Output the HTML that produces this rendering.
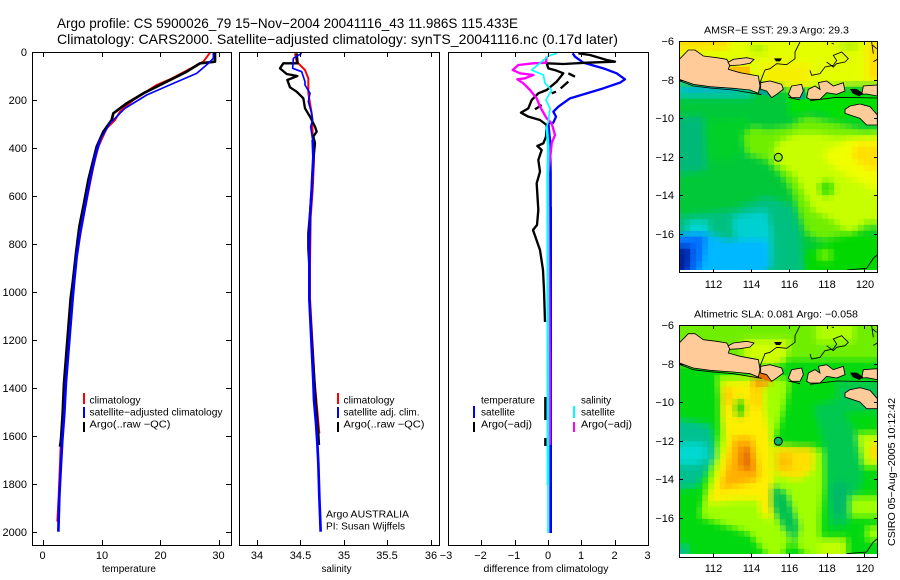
<!DOCTYPE html>
<html><head><meta charset="utf-8"><title>Argo profile</title>
<style>
html,body{margin:0;padding:0;background:#fff;width:900px;height:580px;overflow:hidden}
svg{display:block;font-family:"Liberation Sans",sans-serif;fill:#000}
text{font-size:10px}
.t{font-size:14px}
.l{font-size:11px}
.e{text-anchor:end}
.m{text-anchor:middle}
polyline{fill:none;stroke-linejoin:round;stroke-linecap:butt}
</style></head><body>
<svg width="900" height="580" viewBox="0 0 900 580" xmlns="http://www.w3.org/2000/svg">
<defs>
<filter id="b" filterUnits="userSpaceOnUse" x="640" y="0" width="260" height="580" color-interpolation-filters="sRGB">
<feGaussianBlur stdDeviation="3.5" result="s"/>
<feFlood x="680" y="41" width="2" height="2" flood-color="#000"/>
<feComposite x="680" y="41" width="6" height="6"/>
<feTile result="t"/>
<feComposite in="s" in2="t" operator="in"/>
<feMorphology operator="dilate" radius="2"/>
</filter>
<clipPath id="c1"><rect x="680" y="41" width="198" height="229"/></clipPath>
<clipPath id="c2"><rect x="680" y="325" width="198" height="229"/></clipPath>
<g id="land" stroke="#000" stroke-width="2.6">
<path fill="#ffcc99" d="M88 118L115 90L135 90L160 108L200 113L230 118L240 133L235 148L270 158L325 168L330 198L325 220L300 210L250 205L180 200L130 193L88 178Z"/>
<path fill="#ffcc99" d="M234 127L250 118L290 113L312 118L300 130L270 135L240 137Z"/>
<path fill="#ffcc99" d="M332 188L360 183L395 193L400 208L380 223L365 233L350 213L332 208Z"/>
<path fill="#ffcc99" d="M425 198L455 193L460 213L450 233L425 233L415 223Z"/>
<path fill="#ffcc99" d="M470 233L475 208L495 198L510 208L505 188L530 183L550 198L580 188L585 213L560 223L530 218L510 238L480 238Z"/>
<path fill="#ffcc99" d="M640 198L682 195V228L650 222L635 223Z"/>
<path fill="#ffcc99" d="M585 268L600 258L630 252L660 260L682 285V315L650 315L630 295L600 285L585 280Z"/>
<path fill="none" d="M88 182L130 198L180 204L250 210L335 224M415 232L450 240M480 242L560 232L682 234M330 188L345 150L360 146L380 131L410 134L435 116L435 96L450 66M480 151L485 166L510 161L525 141L550 136L560 121L550 106L575 96L595 116L585 126L560 131L550 141L530 126M545 70L552 72M665 66L670 101M680 86L668 76M670 125L682 118M590 750L650 745L670 715L682 705"/>
<path fill="#000" stroke="none" d="M600 207H620L640 220L628 229L608 220ZM372 115H396L390 124H378Z"/>
</g>
</defs>

<!-- Title -->
<text class="t" x="57" y="28" textLength="461" lengthAdjust="spacingAndGlyphs">Argo profile: CS 5900026_79 15−Nov−2004 20041116_43 11.986S 115.433E</text>
<text class="t" x="57" y="44" textLength="561" lengthAdjust="spacingAndGlyphs">Climatology: CARS2000. Satellite−adjusted climatology: synTS_20041116.nc (0.17d later)</text>

<!-- Profile curves -->
<g transform="scale(.33333)">
<polyline stroke="#f00" stroke-width="6" points="630,158 610,185 560,212 510,238 470,255 400,300 360,335 345,360 320,385 295,440 280,500 262,590 245,680 230,770 220,850 212,895"/>
<polyline stroke="#f00" stroke-width="6" points="194,1150 182,1340 176,1490 172,1565"/>
<polyline stroke="#000" stroke-width="8" points="645,158 645,185 600,190 560,215 500,245 430,280 380,310 340,340 335,360 310,395 290,440 280,480 265,540 250,620 238,680 228,760 218,850 212,895 192,1150 188,1240 183,1320 180,1340"/>
<polyline stroke="#00f" stroke-width="5" points="640,158 640,175 625,190 590,220 520,250 440,285 375,325 330,370 300,420"/>
<polyline stroke="#00f" stroke-width="8" points="300,420 285,470 270,540 255,620 240,700 230,770 222,850 218,895 198,1145 193,1240 187,1320 182,1410 178,1490 175,1595"/>

<polyline stroke="#f00" stroke-width="6" points="885,160 890,185 915,210 925,235 925,280 935,340 942,480 938,570 932,650 930,800 930,895 944,1145 958,1300"/>
<polyline stroke="#000" stroke-width="7" points="890,160 893,190 850,190 840,205 860,222 892,228 862,240 870,262 890,275 910,295 915,325 930,350 945,380 950,395 940,410 945,430 942,460 938,510 935,570 930,640 925,700 925,745 928,800 928,895 945,1170 950,1240 955,1300 957,1335"/>
<polyline stroke="#00f" stroke-width="5" points="905,160 880,175 878,205 905,215 915,245 915,255 930,280 925,305 935,340 938,360 932,380 938,420"/>
<polyline stroke="#00f" stroke-width="8" points="938,420 940,470 938,510 935,570 930,650 928,745 928,895 940,1145 942,1200 948,1270 952,1330 955,1390 958,1490 962,1595"/>
</g>

<g transform="translate(440 40) scale(.33333)">
<polyline stroke="#00f" stroke-width="7" points="398,40 405,50 430,68 490,85 530,100 555,118 540,128 490,145 440,160 390,175 355,200 340,215 348,230 340,248 325,250 330,300 332,400 332,1479"/>
<polyline stroke="#00f" stroke-width="8" points="332,500 332,1479"/>
<polyline stroke="#000" stroke-width="7" points="415,40 450,45 500,60 525,65 440,68 370,72 320,70 325,85 350,92 370,100 350,125 320,150 295,160 275,180 265,205 243,218 265,230 300,240 320,255 318,290 310,310 292,318 305,330 295,360 300,395 290,430 295,510 291,555 279,570 300,630 309,690 312,750 315,846"/>
<path fill="none" stroke="#000" stroke-width="7" d="M385 100L405 110M385 125L362 145M348 155L335 160M305 195L285 208M316 1071V1140M316 1194V1218"/>
<polyline stroke="#f0f" stroke-width="7" points="320,50 318,68 280,70 235,75 218,90 240,100 280,105 255,115 232,118 250,130 270,150 290,175 300,200 320,235 335,250 345,285 335,310 332,340 325,400 330,1000 330,1215"/>
<polyline stroke="#0ff" stroke-width="5" points="350,40 325,48 305,65 275,90 310,105 315,130 335,150 318,180 330,205 325,245 320,260"/>
<polyline stroke="#0ff" stroke-width="8" points="320,260 325,320 323,400 324,1335"/>
<polyline stroke="#0ff" stroke-width="5" points="324,1335 324,1479"/>
</g>

<!-- Frames and ticks -->
<g shape-rendering="crispEdges" fill="none" stroke="#000" stroke-width="1">
<rect x="32.5" y="52.5" width="199" height="493"/>
<rect x="239.5" y="52.5" width="200" height="493"/>
<rect x="448.5" y="52.5" width="200" height="493"/>
<path d="M32 100.5h5M32 148.5h5M32 196.5h5M32 244.5h5M32 292.5h5M32 340.5h5M32 388.5h5M32 436.5h5M32 484.5h5M32 532.5h5M226 100.5h5M226 148.5h5M226 196.5h5M226 244.5h5M226 292.5h5M226 340.5h5M226 388.5h5M226 436.5h5M226 484.5h5M226 532.5h5"/>
<path d="M43.5 52v5M102.5 52v5M160.5 52v5M219.5 52v5M43.5 540v5M102.5 540v5M160.5 540v5M219.5 540v5"/>
<path d="M257.5 52v5M300.5 52v5M344.5 52v5M387.5 52v5M431.5 52v5M257.5 540v5M300.5 540v5M344.5 540v5M387.5 540v5M431.5 540v5"/>
<path d="M481.5 52v5M515.5 52v5M548.5 52v5M581.5 52v5M615.5 52v5M481.5 540v5M515.5 540v5M548.5 540v5M581.5 540v5M615.5 540v5"/>
</g>

<!-- Profile tick labels -->
<g class="ylabels">
<text class="l e" x="27" y="56">0</text>
<text class="l e" x="27" y="104">200</text>
<text class="l e" x="27" y="152">400</text>
<text class="l e" x="27" y="200">600</text>
<text class="l e" x="27" y="248">800</text>
<text class="l e" x="27" y="296">1000</text>
<text class="l e" x="27" y="344">1200</text>
<text class="l e" x="27" y="392">1400</text>
<text class="l e" x="27" y="440">1600</text>
<text class="l e" x="27" y="488">1800</text>
<text class="l e" x="27" y="536">2000</text>
</g>
<text class="l m" x="42.5" y="559">0</text>
<text class="l m" x="102" y="559">10</text>
<text class="l m" x="160.5" y="559">20</text>
<text class="l m" x="218.5" y="559">30</text>
<text class="l m" x="257" y="559">34</text>
<text class="l m" x="300.5" y="559">34.5</text>
<text class="l m" x="344" y="559">35</text>
<text class="l m" x="387" y="559">35.5</text>
<text class="l m" x="431" y="559">36</text>
<text class="l m" x="446" y="559">−3</text>
<text class="l m" x="480.5" y="559">−2</text>
<text class="l m" x="514" y="559">−1</text>
<text class="l m" x="548" y="559">0</text>
<text class="l m" x="581" y="559">1</text>
<text class="l m" x="614.5" y="559">2</text>
<text class="l m" x="647.5" y="559">3</text>

<text x="102" y="572" textLength="54" lengthAdjust="spacingAndGlyphs">temperature</text>
<text x="321.5" y="572" textLength="30" lengthAdjust="spacingAndGlyphs">salinity</text>
<text x="483.5" y="572" textLength="125" lengthAdjust="spacingAndGlyphs">difference from climatology</text>

<!-- Legends -->
<g shape-rendering="crispEdges">
<rect x="83" y="393" width="2" height="11" fill="#f00"/>
<rect x="83" y="407" width="2" height="11" fill="#00f"/>
<rect x="83" y="422" width="2" height="10" fill="#000"/>
<rect x="337" y="393" width="2" height="11" fill="#f00"/>
<rect x="337" y="407" width="2" height="11" fill="#00f"/>
<rect x="337" y="422" width="2" height="10" fill="#000"/>
<rect x="473" y="406" width="2" height="12" fill="#00f"/>
<rect x="473" y="422" width="2" height="10" fill="#000"/>
<rect x="573" y="406" width="2" height="12" fill="#0ff"/>
<rect x="573" y="422" width="2" height="10" fill="#f0f"/>
</g>
<text x="89.5" y="403.5" textLength="51" lengthAdjust="spacingAndGlyphs">climatology</text>
<text x="89.5" y="415.5" textLength="133" lengthAdjust="spacingAndGlyphs">satellite−adjusted climatology</text>
<text x="89.5" y="427.5" textLength="81" lengthAdjust="spacingAndGlyphs">Argo(..raw −QC)</text>
<text x="343.5" y="403.5" textLength="51" lengthAdjust="spacingAndGlyphs">climatology</text>
<text x="343.5" y="415.5" textLength="76" lengthAdjust="spacingAndGlyphs">satellite adj. clim.</text>
<text x="343.5" y="427.5" textLength="81" lengthAdjust="spacingAndGlyphs">Argo(..raw −QC)</text>
<text x="326" y="517.5" textLength="83" lengthAdjust="spacingAndGlyphs">Argo AUSTRALIA</text>
<text x="326" y="529.5" textLength="79" lengthAdjust="spacingAndGlyphs">PI: Susan Wijffels</text>
<text x="481" y="403.5" textLength="54" lengthAdjust="spacingAndGlyphs">temperature</text>
<text x="481" y="415.5" textLength="34" lengthAdjust="spacingAndGlyphs">satellite</text>
<text x="481" y="427.5" textLength="51" lengthAdjust="spacingAndGlyphs">Argo(−adj)</text>
<text x="581" y="403.5" textLength="30" lengthAdjust="spacingAndGlyphs">salinity</text>
<text x="581" y="415.5" textLength="34" lengthAdjust="spacingAndGlyphs">satellite</text>
<text x="581" y="427.5" textLength="51" lengthAdjust="spacingAndGlyphs">Argo(−adj)</text>

<!-- Map 1 -->
<g clip-path="url(#c1)">
<g filter="url(#b)"><g transform="translate(650 20) scale(.33333)">
<rect x="-50" y="-50" width="900" height="900" fill="#00c838"/>
<path fill="#e4ff00" d="M0 0H800V195H600L430 210L330 185L0 175Z"/>
<path fill="#ffdc00" d="M0 0H240V85L88 90L0 85Z"/>
<path fill="#ffe000" d="M650 0H800V180H650Z"/>
<path fill="#f6f000" d="M340 130H480V195H340Z"/>
<path fill="#b0f000" d="M300 75H350V100H300ZM570 60H625V90H570Z"/>
<path fill="#00c8b0" d="M0 185L310 210V232L0 232Z"/>
<path fill="#00b0e0" d="M100 200L260 204V216H100Z"/>
<path fill="#00e000" d="M410 215H800V300H560L500 270L420 290Z"/>
<path fill="#00b878" d="M0 290L160 290L170 450L0 470Z"/>
<path fill="#00d028" d="M170 300L300 290L280 370L250 420L170 420Z"/>
<path fill="#70ee00" d="M280 345L310 320L350 330L420 320L470 290L560 310L640 330L800 320V800L680 620L600 640L520 660L470 640L450 580L430 520L400 470L350 420L290 400Z"/>
<path fill="#c8ff00" d="M380 370L440 340L500 340L560 350L800 340V620L650 600L600 640L550 600L490 570L470 530L440 470L400 440L370 420Z"/>
<path fill="#f0ff00" d="M520 400L600 360L800 350V540L680 510L600 470L540 430Z"/>
<path fill="#ffe000" d="M600 410L620 370H800V450L650 450Z"/>
<ellipse cx="530" cy="505" rx="24" ry="24" fill="#30e000"/>
<path fill="#00d800" d="M460 700L520 670L600 640L680 640H800V800H460Z"/>
<ellipse cx="525" cy="705" rx="22" ry="18" fill="#70f000"/>
<path fill="#00c080" d="M0 600L250 570L350 530L430 560L450 640L470 800H0Z"/>
<path fill="#00d0d0" d="M250 590L350 570L365 640V740L250 640Z"/>
<path fill="#00d8d0" d="M115 605H175V650H115Z"/>
<path fill="#00b8ff" d="M0 640H170L230 660H350L360 740L300 800H0Z"/>
<path fill="#0070ff" d="M0 655L170 640L160 720L130 800H0Z"/>
<path fill="#0020a0" d="M0 680H125L120 740L100 800H0Z"/>
</g></g>
<g transform="translate(650 20) scale(.33333)">
<path fill="#ffc000" d="M238 140H300V162H240Z"/>
<path fill="#e87000" d="M255 155H270V165H255Z"/>
<path fill="#00a890" d="M328 208H350L368 236L352 226L328 222ZM455 205H465V238H440Z"/>
<use href="#land"/>
</g>
</g>
<circle cx="778.3" cy="157.3" r="4" fill="#90f000" stroke="#000"/>

<!-- Map 2 -->
<g clip-path="url(#c2)">
<g filter="url(#b)"><g transform="translate(650 300) scale(.33333)">
<rect x="-50" y="-50" width="900" height="900" fill="#00d810"/>
<path fill="#70ee00" d="M0 0H800V180H400L340 200L0 190Z"/>
<path fill="#d0ff00" d="M280 120H420L400 190L340 200L280 170Z"/>
<path fill="#b0ff00" d="M500 60H610V125H500Z"/>
<path fill="#00c850" d="M560 245H800V335H560Z"/>
<path fill="#a0ff00" d="M200 225H350L420 240L400 330L370 430L520 450V560L510 650V800L420 720L380 800L300 700L150 650L170 560L210 400L210 300Z"/>
<path fill="#ffee00" d="M215 250L340 240L345 340L365 440L370 560L365 660L330 640L330 600L260 600L170 610L190 560L230 420L215 330Z"/>
<path fill="#ffe000" d="M375 440H490V510L440 540L375 520Z"/>
<path fill="#ffc000" d="M380 460H425V510H380Z"/>
<ellipse cx="270" cy="325" rx="14" ry="28" fill="#10d000"/>
<path fill="#ffc800" d="M220 265H250L240 320L225 310ZM305 250H330V330L310 320Z"/>
<path fill="#ffb000" d="M250 410H310L330 520L320 545L210 570L230 500Z"/>
<path fill="#e87000" d="M272 440H300L312 515L268 505Z"/>
<path fill="#f09000" d="M305 232H360V258H310Z"/>
<path fill="#c0ff00" d="M620 400H800V500H640Z"/>
<path fill="#ffd800" d="M660 430H800V480H660Z"/>
<path fill="#00c050" d="M365 555L410 575L450 680L435 730L395 680L365 620Z"/>
<path fill="#00c850" d="M490 320L560 300L620 400L640 530L590 680L540 680L530 520L520 420Z"/>
<path fill="#00b868" d="M540 550H600L580 650H550Z"/>
<path fill="#00c090" d="M0 345L180 375L200 470L140 560L0 575Z"/>
<path fill="#00d8d0" d="M70 430H165L175 475L130 495L70 490Z"/>
<path fill="#00c090" d="M0 735H115V800H0Z"/>
<path fill="#c0ff00" d="M510 715H590V800H510Z"/>
<path fill="#a0ff00" d="M600 590H800V650H600ZM650 680H800V720H650Z"/>
</g></g>
<g transform="translate(650 300) scale(.33333)">
<path fill="#e87000" d="M325 220H352L368 248L345 240L325 232Z"/>
<use href="#land" transform="translate(0 11)"/>
</g>
</g>
<circle cx="778.3" cy="441.3" r="4" fill="#00b860" stroke="#000"/>

<!-- Map frames and ticks -->
<g shape-rendering="crispEdges" fill="none" stroke="#000">
<rect x="679.5" y="41.5" width="198" height="231"/>
<rect x="679.5" y="325.5" width="198" height="232"/>
<path d="M679 41.5h4M679 80.5h4M679 118.5h4M679 157.5h4M679 195.5h4M679 234.5h4M874 41.5h4M874 80.5h4M874 118.5h4M874 157.5h4M874 195.5h4M874 234.5h4M713.5 41v4M751.5 41v4M789.5 41v4M827.5 41v4M864.5 41v4M713.5 269v4M751.5 269v4M789.5 269v4M827.5 269v4M864.5 269v4"/>
<path d="M679 325.5h4M679 364.5h4M679 402.5h4M679 441.5h4M679 479.5h4M679 518.5h4M874 325.5h4M874 364.5h4M874 402.5h4M874 441.5h4M874 479.5h4M874 518.5h4M713.5 325v4M751.5 325v4M789.5 325v4M827.5 325v4M864.5 325v4M713.5 553v4M751.5 553v4M789.5 553v4M827.5 553v4M864.5 553v4"/>
</g>

<!-- Map labels -->
<text x="704" y="33.5" textLength="145" lengthAdjust="spacingAndGlyphs">AMSR−E SST: 29.3 Argo: 29.3</text>
<text x="694" y="317.5" textLength="164" lengthAdjust="spacingAndGlyphs">Altimetric SLA: 0.081 Argo: −0.058</text>
<text class="l e" x="674" y="45">−6</text>
<text class="l e" x="674" y="84">−8</text>
<text class="l e" x="674" y="122">−10</text>
<text class="l e" x="674" y="161">−12</text>
<text class="l e" x="674" y="199">−14</text>
<text class="l e" x="674" y="238">−16</text>
<text class="l e" x="674" y="329">−6</text>
<text class="l e" x="674" y="368">−8</text>
<text class="l e" x="674" y="406">−10</text>
<text class="l e" x="674" y="445">−12</text>
<text class="l e" x="674" y="483">−14</text>
<text class="l e" x="674" y="522">−16</text>
<text class="l m" x="713.5" y="288">112</text>
<text class="l m" x="751.5" y="288">114</text>
<text class="l m" x="789.5" y="288">116</text>
<text class="l m" x="827" y="288">118</text>
<text class="l m" x="865" y="288">120</text>
<text class="l m" x="713.5" y="572">112</text>
<text class="l m" x="751.5" y="572">114</text>
<text class="l m" x="789.5" y="572">116</text>
<text class="l m" x="827" y="572">118</text>
<text class="l m" x="865" y="572">120</text>
<text transform="translate(895 546) rotate(-90)" x="0" y="0" textLength="148" lengthAdjust="spacingAndGlyphs">CSIRO 05−Aug−2005 10:12:42</text>
</svg>
</body></html>
